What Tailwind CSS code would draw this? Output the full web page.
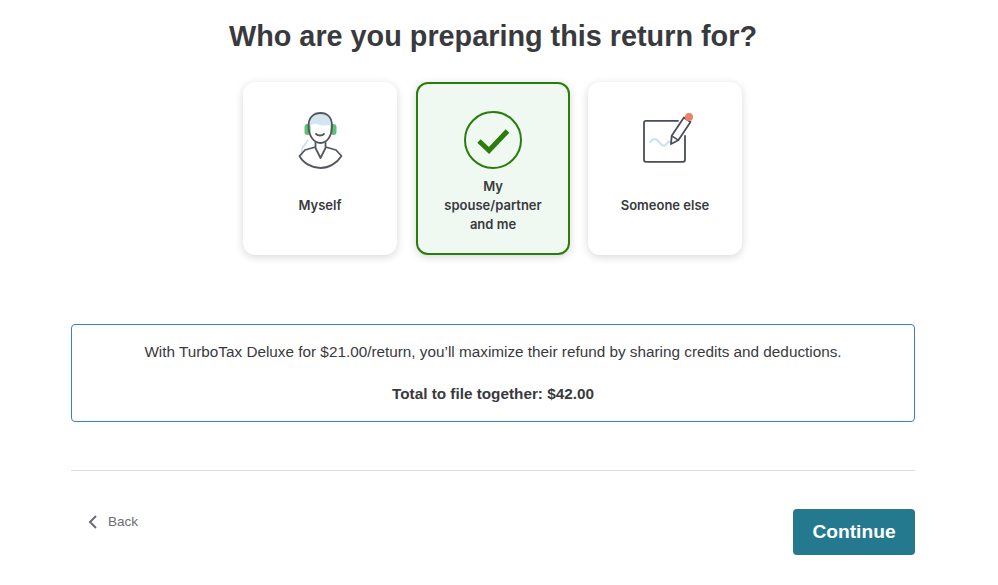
<!DOCTYPE html>
<html>
<head>
<meta charset="utf-8">
<script src="https://cdn.jsdelivr.net/npm/@tailwindcss/browser@4"></script>
</head>
<body class="bg-white overflow-hidden">
<div class="w-[986px] h-[585px] flex flex-col items-center font-['Liberation_Sans',Arial,sans-serif] text-[#393a3d]">
  <h1 class="mt-[17px] h-[38px] text-[28.8px] leading-[38px] font-bold text-center text-[#393a3d]">Who are you preparing this return for?</h1>
  <div class="mt-[27px] flex gap-[18px] font-['Inter',sans-serif] text-[13px] leading-[19px] font-semibold text-center">
    <div class="w-[154px] h-[173px] -ml-[1px] mr-[1px] rounded-[12px] bg-white shadow-[0_2px_8px_rgba(0,0,0,0.16)] flex flex-col items-center">
      <svg class="mt-[28px] shrink-0" width="48" height="60" viewBox="296 110 48 60" fill="none">
        <path d="M309 127 C309 117 314 113 320.5 113 C327 113 332 117 332 127 C329 124 326 126 322 125.5 C318 125 314 121 309 127 Z" fill="#d3e6ef"/>
        <path d="M308 140 C304 146 300 149 302 156" stroke="#c9e0ec" stroke-width="1.6"/>
        <rect x="304.5" y="124" width="6" height="11" rx="3" fill="#60c074"/>
        <rect x="330.5" y="124" width="6" height="11" rx="3" fill="#60c074"/>
        <path d="M308.5 126 C308.5 117 314 113 320.5 113 C327 113 332 117 332 126 C332 136 327 143 320.5 143 C314 143 308.5 136 308.5 126 Z" stroke="#54575f" stroke-width="1.8"/>
        <path d="M316 134 C318 136 322 136 324 134" stroke="#54575f" stroke-width="1.8" stroke-linecap="round"/>
        <path d="M315.5 142 V148 L320.5 158 L325.5 148 V142" stroke="#54575f" stroke-width="1.8" stroke-linejoin="round"/>
        <path d="M315.5 147 L305 150 L299.5 156 C303 163 312 168 320.5 168 C329 168 337 163 341.5 156 L336 150 L325.5 147" stroke="#54575f" stroke-width="1.8" stroke-linejoin="round"/>
      </svg>
      <div class="mt-[26px]">Myself</div>
    </div>
    <div class="w-[154px] h-[173px] rounded-[12px] bg-[#eff8f1] border-2 border-[#2a7d0d] shadow-[0_2px_8px_rgba(0,0,0,0.16)] flex flex-col items-center">
      <svg class="mt-[27px] shrink-0" width="58" height="58" viewBox="0 0 58 58" fill="none">
        <circle cx="29" cy="29" r="28" stroke="#2a7d0d" stroke-width="2"/>
        <path d="M15 30 L25 39.5 L43.5 20" stroke="#2a7d0d" stroke-width="5"/>
      </svg>
      <div class="mt-[8px] w-[110px]">My spouse/partner and me</div>
    </div>
    <div class="w-[154px] h-[173px] rounded-[12px] bg-white shadow-[0_2px_8px_rgba(0,0,0,0.16)] flex flex-col items-center">
      <svg class="mt-[30px] shrink-0" width="56" height="52" viewBox="637 112 56 52" fill="none">
        <path d="M678 120.8 H646 A2 2 0 0 0 644 122.8 V159.8 A2 2 0 0 0 646 161.8 H683 A2 2 0 0 0 685 159.8 V136" stroke="#4a4e58" stroke-width="1.8" stroke-linecap="round"/>
        <path d="M650 142 C654 137 657 139 660 143 C663 147 665 147 668 142 C669 141 670 142 671 143" stroke="#cfe3ed" stroke-width="2.2" stroke-linecap="round"/>
        <path d="M683.9 117.5 L690.5 121.9 L678.3 140.2 L671 144 L671.7 135.8 Z" fill="#fff" stroke="#4a4e58" stroke-width="1.8" stroke-linejoin="round"/>
        <path d="M671.7 135.8 L678.3 140.2" stroke="#4a4e58" stroke-width="1.6"/>
        <circle cx="689" cy="117" r="4" fill="#ee7f6c"/>
      </svg>
      <div class="mt-[32px]">Someone else</div>
    </div>
  </div>
  <div class="mt-[69px] w-[844px] h-[98px] rounded-[4px] border border-[#3d7ecb] flex flex-col items-center text-[15.3px] leading-[20px] text-[#393a3d] pt-[17px]">
    <p>With TurboTax Deluxe for $21.00/return, you’ll maximize their refund by sharing credits and deductions.</p>
    <p class="mt-[22px] font-bold">Total to file together: $42.00</p>
  </div>
  <div class="mt-[48px] w-[844px] border-t border-[#dcdde0]"></div>
  <div class="w-[844px] flex justify-between items-start">
    <div class="ml-[16px] mt-[41px] flex items-center gap-[10px] text-[13.5px] leading-[20px] text-[#6b6c72]">
      <svg width="11" height="16" viewBox="0 0 11 16" fill="none"><path d="M9 2 L3 8 L9 14" stroke="#6b6c72" stroke-width="2"/></svg>
      <span>Back</span>
    </div>
    <button class="mt-[38px] w-[122px] h-[46px] rounded-[4px] bg-[#25798f] text-white text-[19.2px] font-bold">Continue</button>
  </div>
</div>
</body>
</html>
